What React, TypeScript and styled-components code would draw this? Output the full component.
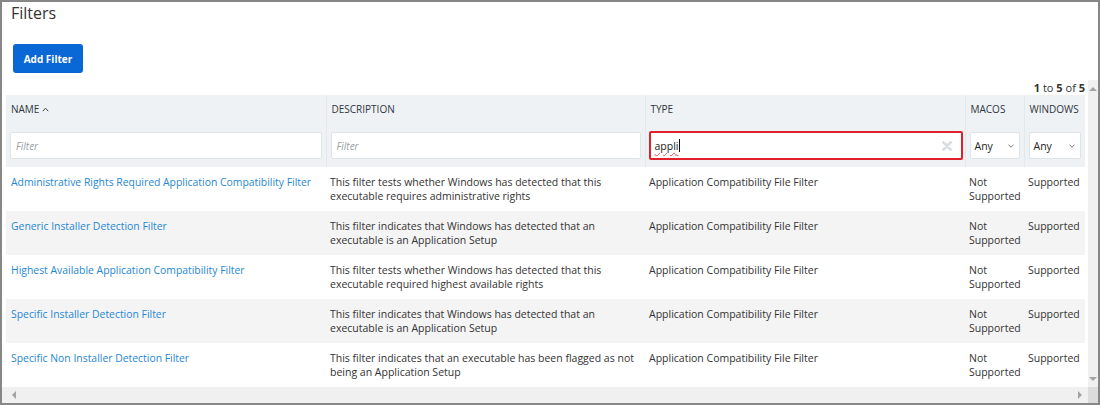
import React from "react";
import styled, { createGlobalStyle } from "styled-components";

const Global = createGlobalStyle`
  html, body { margin: 0; padding: 0; background: #fff; }
  body { font-family: "Open Sans", "Noto Sans", sans-serif; color: #333; }
  * { box-sizing: border-box; }
`;

const Frame = styled.div`
  width: 1100px;
  height: 405px;
  border: 2px solid #878787;
  display: flex;
  flex-direction: column;
  background: #fff;
  overflow: hidden;
`;

const Top = styled.div`
  height: 78px;
  flex: none;
  padding: 0 0 0 9px;
`;

const Title = styled.h1`
  margin: 0;
  font-size: 16px;
  font-weight: 400;
  line-height: 22px;
  color: #333;
`;

const AddButton = styled.button`
  margin: 20px 0 0 2px;
  width: 70px;
  height: 29px;
  border: none;
  border-radius: 3px;
  background: #0a67d6;
  color: #fff;
  font-family: inherit;
  font-size: 10px;
  font-weight: 700;
  padding: 0;
`;

const ScrollArea = styled.div`
  flex: 1;
  display: grid;
  grid-template-columns: 1fr 10px;
  grid-template-rows: 1fr 16px;
  min-height: 0;
`;

const Content = styled.div`
  overflow: hidden;
  padding-left: 4px;
  min-width: 0;
`;

const Pager = styled.div`
  height: 15px;
  line-height: 15px;
  font-size: 11px;
  text-align: right;
  width: 1079px;
  color: #333;
  b { font-weight: 700; }
`;

const Table = styled.table`
  width: 1079px;
  border-collapse: collapse;
  table-layout: fixed;
  font-size: 10.5px;
`;

const HeadCell = styled.th<{ $last?: boolean }>`
  background: #eef2f5;
  height: 30px;
  padding: 0 4px 2px 5px;
  text-align: left;
  vertical-align: middle;
  font-weight: 400;
  font-size: 10px;
  text-transform: uppercase;
  color: #2f3640;
  border-right: ${(p) => (p.$last ? "none" : "1px solid #e3e8ec")};
  white-space: nowrap;
  overflow: hidden;
`;

const FilterCell = styled.td<{ $last?: boolean }>`
  background: #eef2f5;
  height: 41px;
  padding: 7px 4px 7px 4px;
  border-right: ${(p) => (p.$last ? "none" : "1px solid #e3e8ec")};
  vertical-align: top;
`;

const FilterBox = styled.div<{ $active?: boolean }>`
  background: #fff;
  border: ${(p) => (p.$active ? "2px solid #e2202c" : "1px solid #dfe4e8")};
  border-radius: 2px;
  display: flex;
  align-items: center;
  padding: ${(p) => (p.$active ? "0 9px 0 4px" : "0 0 0 5px")};
  font-size: 10px;
  margin-left: ${(p) => (p.$active ? "-1px" : "0")};
  margin-right: ${(p) => (p.$active ? "-2px" : "0")};
  margin-top: ${(p) => (p.$active ? "-1px" : "0")};
  height: ${(p) => (p.$active ? "29px" : "27px")};
`;

const Placeholder = styled.span`
  color: #9aa0a6;
  font-style: italic;
`;

const Typed = styled.span`
  color: #222;
  font-size: 10.5px;
  text-decoration: underline wavy #e24a4a;
  text-decoration-thickness: 1px;
  text-underline-offset: 2px;
`;

const Caret = styled.span`
  display: inline-block;
  width: 1px;
  height: 13px;
  background: #111;
  margin-left: 1px;
`;

const Grow = styled.span`
  flex: 1;
`;

const SelectBox = styled.div`
  height: 27px;
  background: #fff;
  border: 1px solid #dfe4e8;
  border-radius: 2px;
  display: flex;
  align-items: center;
  justify-content: space-between;
  padding: 0 5px 0 4px;
  font-size: 10.5px;
  color: #222;
`;

const Row = styled.tr<{ $alt?: boolean }>`
  background: ${(p) => (p.$alt ? "#f4f4f4" : "#fff")};
`;

const Cell = styled.td`
  height: 44px;
  padding: 8px 4px 6px 4px;
  vertical-align: top;
  line-height: 14px;
  color: #333;
  overflow: hidden;
`;

const NameCell = styled(Cell)`
  padding-left: 5px;
`;

const LinkText = styled.a`
  color: #1f87d6;
  text-decoration: none;
  font-size: 10.4px;
`;

const VBar = styled.div`
  background: #f0f0f0;
  display: flex;
  flex-direction: column;
  justify-content: space-between;
  align-items: center;
  padding: 6px 0 5px;
`;

const HBar = styled.div`
  background: #f0f0f0;
  display: flex;
  justify-content: space-between;
  align-items: center;
  padding: 0 5px 0 9px;
`;

const Corner = styled.div`
  background: #dcdcdc;
`;

const Tri = ({ dir }: { dir: "up" | "down" | "left" | "right" }) => {
  const pts = {
    up: "0,5 4,1 8,5",
    down: "0,1 4,5 8,1",
    left: "5,0 1,4 5,8",
    right: "1,0 5,4 1,8",
  }[dir];
  const vertical = dir === "up" || dir === "down";
  return (
    <svg width={vertical ? 8 : 6} height={vertical ? 6 : 8} viewBox={vertical ? "0 0 8 6" : "0 0 6 8"}>
      <polygon points={pts} fill="#a3a3a3" />
    </svg>
  );
};

const SortUp = () => (
  <svg width="7" height="5" viewBox="0 0 7 5" style={{ marginLeft: 3, verticalAlign: "1px" }}>
    <polyline points="0.8,4.2 3.5,1.2 6.2,4.2" fill="none" stroke="#444" strokeWidth="1" />
  </svg>
);

const Chevron = () => (
  <svg width="6" height="4" viewBox="0 0 6 4">
    <polyline points="0.5,0.8 3,3.2 5.5,0.8" fill="none" stroke="#777" strokeWidth="1" />
  </svg>
);

const ClearX = () => (
  <svg width="10" height="10" viewBox="0 0 10 10">
    <path d="M1.5 1.5 L8.5 8.5 M8.5 1.5 L1.5 8.5" stroke="#d9dee3" strokeWidth="2.8" strokeLinecap="round" />
  </svg>
);

const rows = [
  {
    name: "Administrative Rights Required Application Compatibility Filter",
    desc: "This filter tests whether Windows has detected that this executable requires administrative rights",
  },
  {
    name: "Generic Installer Detection Filter",
    desc: "This filter indicates that Windows has detected that an executable is an Application Setup",
  },
  {
    name: "Highest Available Application Compatibility Filter",
    desc: "This filter tests whether Windows has detected that this executable required highest available rights",
  },
  {
    name: "Specific Installer Detection Filter",
    desc: "This filter indicates that Windows has detected that an executable is an Application Setup",
  },
  {
    name: "Specific Non Installer Detection Filter",
    desc: "This filter indicates that an executable has been flagged as not being an Application Setup",
  },
];

export default function App() {
  return (
    <>
      <Global />
      <Frame>
        <Top>
          <Title>Filters</Title>
          <AddButton>Add Filter</AddButton>
        </Top>
        <ScrollArea>
          <Content>
            <Pager>
              <b>1</b> to <b>5</b> of <b>5</b>
            </Pager>
            <Table>
              <colgroup>
                <col style={{ width: 320 }} />
                <col style={{ width: 319 }} />
                <col style={{ width: 320 }} />
                <col style={{ width: 59 }} />
                <col style={{ width: 61 }} />
              </colgroup>
              <thead>
                <tr>
                  <HeadCell>
                    Name
                    <SortUp />
                  </HeadCell>
                  <HeadCell>Description</HeadCell>
                  <HeadCell>Type</HeadCell>
                  <HeadCell>macOS</HeadCell>
                  <HeadCell $last>Windows</HeadCell>
                </tr>
                <tr>
                  <FilterCell>
                    <FilterBox>
                      <Placeholder>Filter</Placeholder>
                    </FilterBox>
                  </FilterCell>
                  <FilterCell>
                    <FilterBox>
                      <Placeholder>Filter</Placeholder>
                    </FilterBox>
                  </FilterCell>
                  <FilterCell>
                    <FilterBox $active>
                      <Typed>appli</Typed>
                      <Caret />
                      <Grow />
                      <ClearX />
                    </FilterBox>
                  </FilterCell>
                  <FilterCell>
                    <SelectBox>
                      Any
                      <Chevron />
                    </SelectBox>
                  </FilterCell>
                  <FilterCell $last>
                    <SelectBox>
                      Any
                      <Chevron />
                    </SelectBox>
                  </FilterCell>
                </tr>
              </thead>
              <tbody>
                {rows.map((r, i) => (
                  <Row key={r.name} $alt={i % 2 === 1}>
                    <NameCell>
                      <LinkText href="#">{r.name}</LinkText>
                    </NameCell>
                    <Cell>{r.desc}</Cell>
                    <Cell>Application Compatibility File Filter</Cell>
                    <Cell>Not Supported</Cell>
                    <Cell>Supported</Cell>
                  </Row>
                ))}
              </tbody>
            </Table>
          </Content>
          <VBar>
            <Tri dir="up" />
            <Tri dir="down" />
          </VBar>
          <HBar>
            <Tri dir="left" />
            <Tri dir="right" />
          </HBar>
          <Corner />
        </ScrollArea>
      </Frame>
    </>
  );
}
